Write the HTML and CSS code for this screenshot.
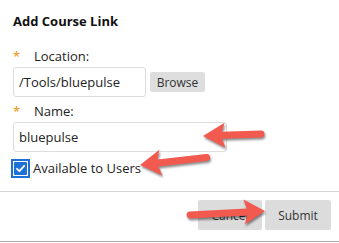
FILE: index.html
```html
<!DOCTYPE html>
<html lang="en">
<head>
    <meta charset="UTF-8">
    <meta name="viewport" content="width=device-width, initial-scale=1.0">
    <title>Add Course Link</title>
    <link rel="stylesheet" href="styles.css">
</head>
<body>
    <div class="dialog">
        <form class="panel">
            <h1>Add Course Link</h1>

            <label class="field-label" for="location"><span class="required-star">*</span>Location:</label>
            <div class="field-row">
                <input type="text" id="location" class="location-input" value="/Tools/bluepulse">
                <button type="button" class="browse-btn">Browse</button>
            </div>

            <label class="field-label" for="name"><span class="required-star">*</span>Name:</label>
            <div class="field-row">
                <input type="text" id="name" class="name-input" value="bluepulse">
            </div>

            <label class="check-row">
                <span class="check-box">
                    <svg width="13" height="13" viewBox="0 0 13 13"><path d="M3 6.8l2.4 2.4 4.8-5.4" fill="none" stroke="#fff" stroke-width="1.8" stroke-linecap="round" stroke-linejoin="round"/></svg>
                </span>
                Available to Users
            </label>
        </form>

        <div class="footer">
            <button type="button" class="footer-btn">Cancel</button>
            <button type="submit" class="footer-btn">Submit</button>
        </div>
    </div>

    <!-- annotation arrows over the screenshot -->
    <svg class="arrows" width="339" height="243" viewBox="0 0 339 243">
        <path d="M0 0 L22 -12.5 L19 -3.5 L58 -3.5 A3.5 3.5 0 0 1 58 3.5 L19 3.5 L22 12.5 Z" transform="translate(203 136) rotate(-2)"/>
        <path d="M0 0 L21 -13 L18 -3.5 L67 -3.5 A3.5 3.5 0 0 1 67 3.5 L18 3.5 L21 13 Z" transform="translate(140 165) rotate(-6.5)"/>
        <path d="M0 0 L21 -12.5 L18 -3.5 L75 -3.5 A3.5 3.5 0 0 1 75 3.5 L18 3.5 L21 12.5 Z" transform="translate(265 211) rotate(177)"/>
    </svg>
</body>
</html>
```

FILE: styles.css
```css
*{
    margin:0;
    padding:0;
    box-sizing:border-box;
    font-family:'Open Sans', sans-serif;
}
body {
    width:339px;
    height:243px;
    overflow:hidden;
    background-color:#fff;
    color:#222;
    position:relative;
}
.dialog {
    height:242px;
    border-bottom:1px solid #aaa;
}
.panel {
    padding:11px 13px 0;
    height:192px;
    border-bottom:1px solid #d4d4d4;
}
h1 {
    font-size:13px;
    font-weight:700;
    line-height:20px;
    margin-bottom:15px;
    color:#111;
}
.field-label {
    display:flex;
    align-items:center;
    font-size:13px;
    line-height:20px;
    margin-bottom:1px;
}
.required-star {
    color:#f0a030;
    width:21px;
    font-size:13px;
    font-weight:600;
}
.field-row {
    display:flex;
    align-items:center;
    margin-bottom:4px;
}
.field-row:last-of-type {
    margin-bottom:6px;
}
input {
    height:30px;
    padding:0 5px;
    font-size:13px;
    color:#222;
    border:1px solid #ddd;
    border-radius:3px;
    outline:none;
}
.location-input {
    width:133px;
}
.name-input {
    width:214px;
}
.browse-btn {
    margin-left:4px;
    height:20px;
    width:55px;
    border:none;
    border-radius:2px;
    background-color:#dedede;
    font-size:12px;
    color:#333;
}
.check-row {
    display:flex;
    align-items:center;
    margin-left:-2px;
    font-size:13px;
    line-height:20px;
}
.check-box {
    width:19px;
    height:19px;
    border:2px solid #1b72d4;
    padding:1px;
    margin-right:3px;
    display:flex;
}
.check-box svg {
    background-color:#1b72d4;
    border-radius:1px;
}
.footer {
    display:flex;
    justify-content:flex-end;
    gap:3px;
    padding:8px 8px 0 0;
}
.footer-btn {
    height:30px;
    width:64px;
    border:none;
    border-radius:2px;
    background-color:#dcdcdc;
    font-size:12px;
    color:#333;
}
.footer-btn:last-child {
    width:66px;
}
.arrows {
    position:absolute;
    left:0;
    top:0;
    fill:#f25a4f;
    filter:drop-shadow(1px 2px 1.2px rgba(0,0,0,0.45));
}
```
